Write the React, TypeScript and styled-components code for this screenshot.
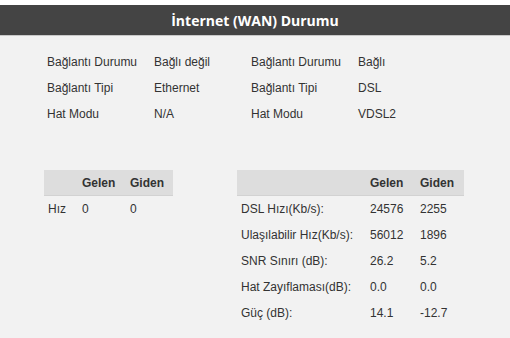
import React from 'react';
import styled, { createGlobalStyle } from 'styled-components';

const GlobalStyle = createGlobalStyle`
  html, body {
    margin: 0;
    padding: 0;
    background: #fff;
  }
  body {
    font-family: "Liberation Sans", Arial, sans-serif;
    font-size: 12px;
    color: #333;
  }
`;

const leftInfo = [
  ['Bağlantı Durumu', 'Bağlı değil'],
  ['Bağlantı Tipi', 'Ethernet'],
  ['Hat Modu', 'N/A'],
];

const rightInfo = [
  ['Bağlantı Durumu', 'Bağlı'],
  ['Bağlantı Tipi', 'DSL'],
  ['Hat Modu', 'VDSL2'],
];

const dslRows = [
  ['DSL Hızı(Kb/s):', '24576', '2255'],
  ['Ulaşılabilir Hız(Kb/s):', '56012', '1896'],
  ['SNR Sınırı (dB):', '26.2', '5.2'],
  ['Hat Zayıflaması(dB):', '0.0', '0.0'],
  ['Güç (dB):', '14.1', '-12.7'],
];

const App: React.FC = () => {
  return (
    <Page>
      <GlobalStyle />
      <Header>İnternet (WAN) Durumu</Header>
      <Body>
        <InfoRow>
          <InfoBlock>
            {leftInfo.map(([k, v]) => (
              <React.Fragment key={k}>
                <Cell>{k}</Cell>
                <Cell>{v}</Cell>
              </React.Fragment>
            ))}
          </InfoBlock>
          <InfoBlock>
            {rightInfo.map(([k, v]) => (
              <React.Fragment key={k}>
                <Cell>{k}</Cell>
                <Cell>{v}</Cell>
              </React.Fragment>
            ))}
          </InfoBlock>
        </InfoRow>

        <TablesRow>
          <Table cols="34px 48px 47px">
            <HeadCell />
            <HeadCell>Gelen</HeadCell>
            <HeadCell>Giden</HeadCell>
            <Td>Hız</Td>
            <Td>0</Td>
            <Td>0</Td>
          </Table>

          <Table cols="129px 50px 48px">
            <HeadCell />
            <HeadCell>Gelen</HeadCell>
            <HeadCell>Giden</HeadCell>
            {dslRows.map(([label, rx, tx]) => (
              <React.Fragment key={label}>
                <Td>{label}</Td>
                <Td>{rx}</Td>
                <Td>{tx}</Td>
              </React.Fragment>
            ))}
          </Table>
        </TablesRow>
      </Body>
    </Page>
  );
};

const Page = styled.div`
  padding-top: 5px;
  height: 338px;
  box-sizing: border-box;
  display: flex;
  flex-direction: column;
`;

const Header = styled.div`
  height: 30px;
  background: #444444;
  border-bottom: 1px solid #c8c8c8;
  color: #fff;
  font-family: "Open Sans", "Liberation Sans", sans-serif;
  font-weight: bold;
  font-size: 14px;
  display: flex;
  align-items: center;
  justify-content: center;
`;

const Body = styled.div`
  flex: 1;
  background: #f2f2f2;
  padding: 13px 0 0 0;
`;

const InfoRow = styled.div`
  display: flex;
  padding-left: 47px;
`;

const InfoBlock = styled.div`
  display: grid;
  grid-template-columns: 107px 97px;
  grid-auto-rows: 26px;
`;

const Cell = styled.div`
  display: flex;
  align-items: center;
`;

const TablesRow = styled.div`
  display: flex;
  gap: 64px;
  padding-left: 44px;
  margin-top: 43px;
  align-items: flex-start;
`;

const Table = styled.div<{ cols: string }>`
  display: grid;
  grid-template-columns: ${(p) => p.cols};
  grid-auto-rows: 26px;
`;

const HeadCell = styled.div`
  background: #dddddd;
  border-bottom: 1px solid #d2d2d2;
  font-weight: bold;
  display: flex;
  align-items: center;
  padding-left: 4px;
`;

const Td = styled.div`
  display: flex;
  align-items: center;
  padding-left: 4px;
`;

export default App;
